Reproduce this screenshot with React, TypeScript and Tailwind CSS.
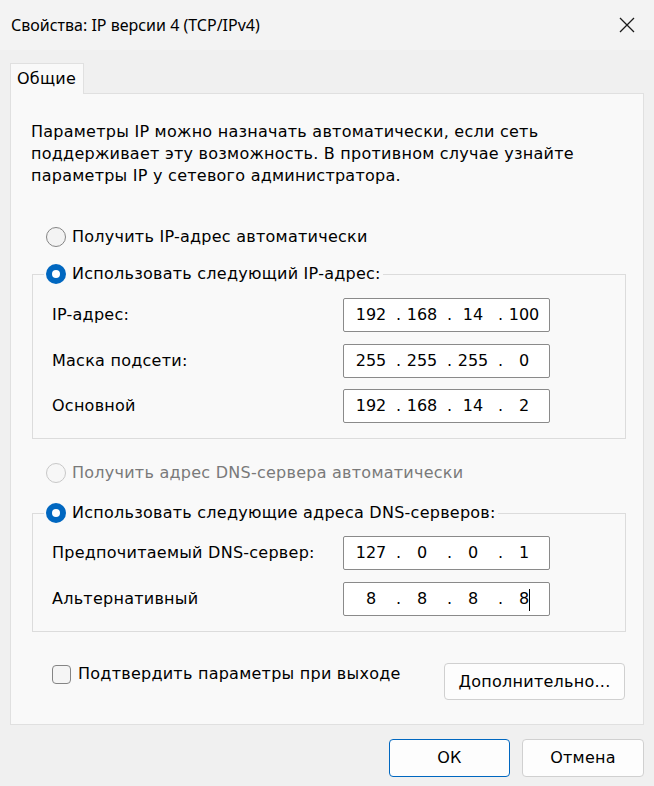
import type { ReactNode } from 'react';

const dlgFont = { fontFamily: '"DejaVu Sans", "Liberation Sans", sans-serif' };

function Radio({ checked, disabled }: { checked?: boolean; disabled?: boolean }) {
  if (checked) {
    return (
      <span className="flex h-[20px] w-[20px] shrink-0 items-center justify-center rounded-full bg-[#0067c0]">
        <span className="h-[8px] w-[8px] rounded-full bg-white" />
      </span>
    );
  }
  return (
    <span
      className={
        disabled
          ? 'h-[20px] w-[20px] shrink-0 rounded-full border border-[#c8c8c8] bg-[#f7f7f7]'
          : 'h-[20px] w-[20px] shrink-0 rounded-full border border-[#858585] bg-[#f3f3f3]'
      }
    />
  );
}

function RadioRow({ label, checked, disabled }: { label: string; checked?: boolean; disabled?: boolean }) {
  return (
    <div className="flex h-[24px] items-center gap-[6px]">
      <Radio checked={checked} disabled={disabled} />
      <span className={disabled ? 'text-[#7a7a7a]' : 'text-black'}>{label}</span>
    </div>
  );
}

function IpField({ octets, caret }: { octets: string[]; caret?: boolean }) {
  return (
    <div className="flex h-[34px] w-[207px] items-center rounded-[2px] border border-[#8a8a8a] bg-white pl-px tracking-normal">
      {octets.map((o, i) => (
        <div key={i} className="flex w-[51px] items-center">
          <span className="w-[6px] text-left leading-none">{i > 0 ? '.' : ''}</span>
          <span className="w-[40px] text-center">
            {o}
            {caret && i === octets.length - 1 ? (
              <span className="-mr-px inline-block h-[22px] w-px bg-black align-middle" />
            ) : null}
          </span>
          <span className="w-[5px]" />
        </div>
      ))}
    </div>
  );
}

function FieldRow({ label, children }: { label: string; children: ReactNode }) {
  return (
    <div className="flex items-center pl-[8px]">
      <span className="w-[291px]">{label}</span>
      {children}
    </div>
  );
}

function Group({ legend, children }: { legend: ReactNode; children: ReactNode }) {
  return (
    <fieldset className="ml-[21px] mr-[17px] border border-[#dcdcdc] px-[11px] pb-[15px]">
      <legend className="px-[2px]">{legend}</legend>
      {children}
    </fieldset>
  );
}

export default function App() {
  return (
    <div
      className="flex h-[786px] w-[654px] flex-col bg-[#f0f0f0] text-[16px] tracking-[0.25px] text-black"
      style={dlgFont}
    >
      <header className="flex h-[50px] items-center justify-between bg-[#f3f3f3] pl-[11px] pr-[18px]">
        <h1 className="text-[16px] tracking-normal" style={{ fontFamily: '"Noto Sans", "Open Sans", sans-serif' }}>
          Свойства: IP версии 4 (TCP/IPv4)
        </h1>
        <svg width="18" height="18" viewBox="0 0 18 18" fill="none" stroke="#1a1a1a" strokeWidth="1.3">
          <path d="M2 2L16 16M16 2L2 16" />
        </svg>
      </header>

      <div className="px-[10px] pt-[13px]">
        <div className="relative z-10 -mb-px flex h-[31px] w-[74px] items-center border border-b-0 border-[#e0e0e0] bg-[#f9f9f9] pl-[6px]">
          Общие
        </div>

        <section className="flex h-[632px] flex-col border border-[#e0e0e0] bg-[#f9f9f9]">
          <p className="pl-[20px] pt-[27px] leading-[22px]">
            Параметры IP можно назначать автоматически, если сеть
            <br />
            поддерживает эту возможность. В противном случае узнайте
            <br />
            параметры IP у сетевого администратора.
          </p>

          <div className="ml-[35px] mt-[38px]">
            <RadioRow label="Получить IP-адрес автоматически" />
          </div>

          <div className="mt-[13px]">
            <Group legend={<RadioRow label="Использовать следующий IP-адрес:" checked />}>
              <div className="mt-[12px] flex flex-col gap-[11.5px]">
                <FieldRow label="IP-адрес:">
                  <IpField octets={['192', '168', '14', '100']} />
                </FieldRow>
                <FieldRow label="Маска подсети:">
                  <IpField octets={['255', '255', '255', '0']} />
                </FieldRow>
                <FieldRow label="Основной">
                  <IpField octets={['192', '168', '14', '2']} />
                </FieldRow>
              </div>
            </Group>
          </div>

          <div className="ml-[35px] mt-[22px]">
            <RadioRow label="Получить адрес DNS-сервера автоматически" disabled />
          </div>

          <div className="mt-[16px]">
            <Group legend={<RadioRow label="Использовать следующие адреса DNS-серверов:" checked />}>
              <div className="mt-[11px] flex flex-col gap-[12px]">
                <FieldRow label="Предпочитаемый DNS-сервер:">
                  <IpField octets={['127', '0', '0', '1']} />
                </FieldRow>
                <FieldRow label="Альтернативный">
                  <IpField octets={['8', '8', '8', '8']} caret />
                </FieldRow>
              </div>
            </Group>
          </div>

          <div className="ml-[41px] mr-[18px] mt-[31px] flex items-start justify-between">
            <label className="flex h-[22px] items-center gap-[7px]">
              <span className="h-[19px] w-[19px] rounded-[4px] border border-[#858585] bg-[#f5f5f5]" />
              Подтвердить параметры при выходе
            </label>
            <button className="h-[37px] w-[181px] rounded-[4px] border border-[#d0d0d0] bg-[#fdfdfd]">
              Дополнительно...
            </button>
          </div>
        </section>

        <div className="mt-[14px] flex justify-end gap-[12px]">
          <button className="h-[38px] w-[121px] rounded-[4px] border border-[#0067c0] bg-[#fdfdfd]">ОК</button>
          <button className="h-[38px] w-[122px] rounded-[4px] border border-[#d0d0d0] bg-[#fdfdfd]">Отмена</button>
        </div>
      </div>
    </div>
  );
}
